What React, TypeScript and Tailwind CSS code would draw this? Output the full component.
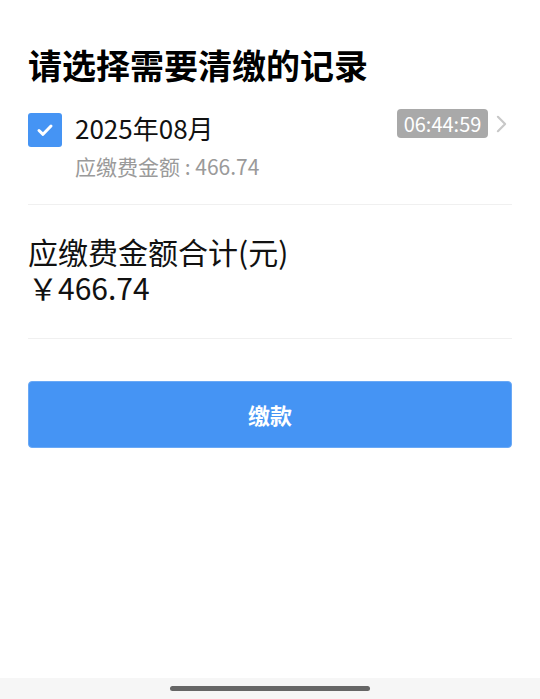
export default function App() {
  return (
    <div
      className="flex min-h-screen flex-col bg-white text-[#111]"
      style={{ fontFamily: '"Noto Sans CJK SC", "Noto Sans", sans-serif' }}
    >
      <div className="flex-1 px-[28px]">
        <h1 className="mt-[45px] text-[34px] leading-[40px] font-bold text-black">
          请选择需要清缴的记录
        </h1>

        <div className="mt-[24px] flex items-start">
          <div className="mt-[4px] flex h-[34px] w-[34px] shrink-0 items-center justify-center rounded-[3px] bg-[#4594f4]">
            <svg viewBox="0 0 24 24" className="h-[24px] w-[24px]" fill="none" stroke="white" strokeWidth="3" strokeLinecap="round" strokeLinejoin="round">
              <path d="M6 12.5l4 3.8 8-8.3" />
            </svg>
          </div>
          <div className="mt-[4px] ml-[13px] flex-1">
            <div className="text-[26px] leading-[30px] text-[#111]">2025年08月</div>
            <div className="mt-[10px] text-[21px] leading-[26px] text-[#9a9a9a]">应缴费金额 : 466.74</div>
          </div>
          <div className="mr-[5px] flex items-center">
            <span className="flex h-[29px] w-[91px] items-center justify-center rounded-[4px] bg-[#a9a9a9] text-[20px] leading-none text-white">
              06:44:59
            </span>
            <svg viewBox="0 0 12 20" className="ml-[8px] h-[18px] w-[11px]" fill="none" stroke="#c8c8c8" strokeWidth="2.4" strokeLinecap="round" strokeLinejoin="round">
              <path d="M2 2l8 8-8 8" />
            </svg>
          </div>
        </div>

        <div className="mt-[25px] h-px bg-[#f0f0f0]" />

        <div className="mt-[27px] text-[30px] leading-[38px] text-[#111]">应缴费金额合计(元)</div>
        <div className="text-[30px] leading-[34px] text-[#111]">￥466.74</div>

        <div className="mt-[34px] h-px bg-[#f0f0f0]" />

        <button className="mt-[42px] flex h-[67px] w-full items-center justify-center rounded-[4px] border border-[#6aa9f6] bg-[#4594f4] text-[22px] font-semibold text-white">
          缴款
        </button>
      </div>

      <div className="flex h-[21px] items-center justify-center bg-[#f6f6f6]">
        <div className="h-[5px] w-[200px] rounded-full bg-[#666]" />
      </div>
    </div>
  )
}
